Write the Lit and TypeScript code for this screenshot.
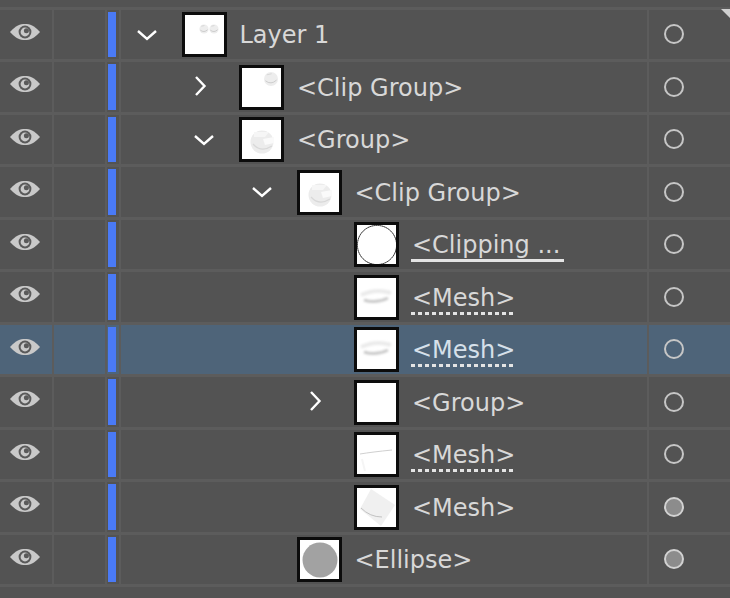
import { LitElement, html, css, svg } from "lit";
import { customElement } from "lit/decorators.js";
import { classMap } from "lit/directives/class-map.js";

type Twist = "open" | "closed" | "";
type Line = "" | "solid" | "dotted";
interface Row { name: string; level: number; twist: Twist; thumb: string; line: Line; filled?: boolean; selected?: boolean; }

const rows: Row[] = [
  { name: "Layer 1", level: 0, twist: "open", thumb: "layer", line: "" },
  { name: "<Clip Group>", level: 1, twist: "closed", thumb: "clip", line: "" },
  { name: "<Group>", level: 1, twist: "open", thumb: "group", line: "" },
  { name: "<Clip Group>", level: 2, twist: "open", thumb: "group", line: "" },
  { name: "<Clipping ...", level: 3, twist: "", thumb: "circle", line: "solid" },
  { name: "<Mesh>", level: 3, twist: "", thumb: "smear", line: "dotted" },
  { name: "<Mesh>", level: 3, twist: "", thumb: "smear", line: "dotted", selected: true },
  { name: "<Group>", level: 3, twist: "closed", thumb: "blank", line: "" },
  { name: "<Mesh>", level: 3, twist: "", thumb: "thin", line: "dotted" },
  { name: "<Mesh>", level: 3, twist: "", thumb: "diamond", line: "", filled: true },
  { name: "<Ellipse>", level: 2, twist: "", thumb: "ellipse", line: "", filled: true },
];

const ball = (cx: number, cy: number, r: number) => svg`
  <circle cx=${cx} cy=${cy} r=${r} fill="#ededed"/>
  <path d="M${cx - r * 0.8} ${cy + r * 0.25}Q${cx} ${cy + r * 0.9} ${cx + r * 0.8} ${cy + r * 0.15}" fill="none" stroke="#c4c4c4" stroke-width="0.8"/>
  <path d="M${cx - r * 0.6} ${cy - r * 0.6}L${cx + r * 0.1} ${cy - r * 0.75}" fill="none" stroke="#cfcfcf" stroke-width="0.7"/>`;

const thumbs: Record<string, unknown> = {
  blank: svg``,
  layer: svg`${ball(19, 14, 4.6)}${ball(29, 14, 4.6)}`,
  clip: svg`${ball(29, 11, 7)}`,
  group: svg`
    <circle cx="20" cy="22" r="11.5" fill="#ececec" filter="url(#s)"/>
    <path d="M12 12H27L23 17H12Z" fill="#f6f6f6"/>
    <path d="M21 19L32 17V23L23 25Z" fill="#fafafa"/>
    <path d="M11 24Q19 33 30 26" fill="none" stroke="#d8d8d8" stroke-width="1.2"/>`,
  circle: svg`<circle cx="20" cy="20" r="19.6" fill="#fff" stroke="#111" stroke-width="1" stroke-dasharray="1.8 .3"/>`,
  smear: svg`
    <path d="M4 17Q19 10 34 15" fill="none" stroke="#ebebeb" stroke-width="4" filter="url(#b)"/>
    <path d="M7 22Q19 26 31 20" fill="none" stroke="#cbcbcb" stroke-width="3" filter="url(#b)"/>`,
  thin: svg`<path d="M3 19Q15 17 35 15" fill="none" stroke="#cacaca" stroke-width="0.9"/>
    <path d="M5 24L8 36" stroke="#f5f5f5" stroke-width="2"/>`,
  diamond: svg`
    <path d="M14 1L38 17L24 38L3 21Z" fill="#f0f0f0"/>
    <path d="M4 20Q13 29 25 29" fill="none" stroke="#bcbcbc" stroke-width="0.9"/>`,
  ellipse: svg`<circle cx="20" cy="20" r="17.5" fill="#a2a2a2"/>`,
};

@customElement("app-root")
export class AppRoot extends LitElement {
  static styles = css`
    :host { display: block; position: relative; width: 730px; height: 598px; overflow: hidden; background: #535353; font-family: "DejaVu Sans", sans-serif; color: #d8d8d8; }
    .list { display: flex; flex-direction: column; padding-top: 6.5px; }
    .row { display: flex; height: 52.5px; box-sizing: border-box; border-top: 3px solid #5c5c5c; }
    .row:last-child { height: 55.5px; border-bottom: 3px solid #5c5c5c; }
    .row.sel { background: #4e6479; color: #d6e0ea; }
    .cell { display: flex; align-items: center; box-sizing: border-box; }
    .eye { width: 54px; border-right: 2px solid #5c5c5c; padding: 0 0 5px 10px; }
    .lock { width: 51px; }
    .color { width: 16px; padding: 2px 3px 2px 1px; border-left: 2px solid #5c5c5c; border-right: 2px solid #5c5c5c; align-items: stretch; }
    .bar { flex: 1; background: #4a7af6; }
    .main { flex: 1; min-width: 0; padding: 1px 0 0 var(--indent); }
    .twist { width: 20px; height: 20px; flex: none; margin-right: 25px; }
    .twist.closed { transform: translate(1px, -1px); }
    .thumb { width: 45px; height: 45px; flex: none; box-sizing: border-box; border: 3px solid #0c0c0c; background: #fff; display: block; }
    .label { margin: 2px 0 0 12px; padding: 0 0 1px 1px; font-size: 24px; line-height: 30px; white-space: pre; }
    .label.solid { background: linear-gradient(#e4e4e4, #e4e4e4) left bottom / 100% 3px no-repeat; padding: 0 4px 2px 1px; margin-top: 3px; }
    .label.dotted { background: repeating-linear-gradient(90deg, #e4e4e4 0 4px, transparent 4px 7px) left bottom / 100% 3px no-repeat; padding-bottom: 2px; margin-top: 3px; }
    .target { width: 83px; border-left: 2px solid #5c5c5c; padding-left: 14px; }
    .corner { position: absolute; top: 9px; right: 0; }
    svg { display: block; }
  `;

  private eye() {
    return html`<svg width="30" height="18" viewBox="0 0 30 18">
      <path d="M0 9C6 2.5 10 1 15 1S24 2.5 30 9C24 15.5 20 17 15 17S6 15.5 0 9Z" fill="#c9c9c9"/>
      <circle cx="15" cy="9" r="6.4" fill="#5a5a5a"/>
      <circle cx="15" cy="9" r="4.4" fill="#c9c9c9"/>
      <circle cx="16.4" cy="7.8" r="2.5" fill="#5a5a5a"/>
    </svg>`;
  }

  private twist(t: Twist) {
    if (t === "open") return html`<svg class="twist" viewBox="0 0 20 20"><path d="M1 6L10 14L19 6" fill="none" stroke="#fff" stroke-width="2.4"/></svg>`;
    if (t === "closed") return html`<svg class="twist closed" viewBox="0 0 20 20"><path d="M1 1L9.5 10L1 19" fill="none" stroke="#fff" stroke-width="2.4"/></svg>`;
    return html`<div class="twist"></div>`;
  }

  private row(r: Row) {
    return html`<div class=${classMap({ row: true, sel: !!r.selected })}>
      <div class="cell eye">${this.eye()}</div>
      <div class="cell lock"></div>
      <div class="cell color"><div class="bar"></div></div>
      <div class="cell main" style="--indent:${15.5 + r.level * 57.5}px">
        ${this.twist(r.twist)}
        <svg class="thumb" viewBox="0 0 39 39">
          <defs>
            <filter id="b" x="-20%" y="-100%" width="140%" height="300%"><feGaussianBlur stdDeviation="1.3"/></filter>
            <filter id="s"><feGaussianBlur stdDeviation="0.4"/></filter>
          </defs>
          ${thumbs[r.thumb]}
        </svg>
        <span class=${classMap({ label: true, solid: r.line === "solid", dotted: r.line === "dotted" })}>${r.name}</span>
      </div>
      <div class="cell target">
        <svg width="22" height="22" viewBox="0 0 22 22">
          <circle cx="11" cy="11" r="9" fill=${r.filled ? "#8c8c8c" : "none"} stroke=${r.filled ? "#d2d2d2" : "#c6c6c6"} stroke-width="2"/>
        </svg>
      </div>
    </div>`;
  }

  render() {
    return html`<div class="list">${rows.map((r) => this.row(r))}</div>
      <svg class="corner" width="9" height="9" viewBox="0 0 9 9"><path d="M0 0H9V9Z" fill="#d0d0d0"/></svg>`;
  }
}
